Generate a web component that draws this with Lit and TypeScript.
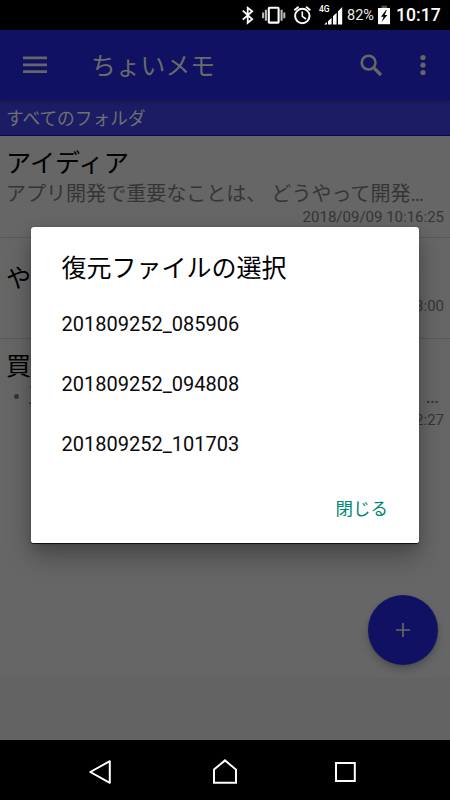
import { LitElement, html, css } from "lit";
import { customElement } from "lit/decorators.js";

interface Memo {
  title: string;
  body: string;
  tail: string;
  date: string;
}

const memos: Memo[] = [
  { title: "アイディア", body: "アプリ開発で重要なことは、 どうやって開発…", tail: "", date: "2018/09/09 10:16:25" },
  { title: "や", body: "", tail: "", date: "2018/09/09 10:13:00" },
  { title: "買", body: "玉", tail: "…", date: "2018/09/09 10:12:27" },
];

const backups = ["201809252_085906", "201809252_094808", "201809252_101703"];

@customElement("status-bar")
class StatusBar extends LitElement {
  static styles = css`
    :host {
      display: flex;
      height: 30px;
      background: #000;
      color: #fff;
      justify-content: flex-end;
      padding-right: 10px;
      box-sizing: border-box;
    }
    svg { display: block; flex: none; }
    .pct { font-size: 14.5px; line-height: 32px; width: 30px; margin-left: 4px; white-space: nowrap; color: #ececec; }
    .clock { font-size: 17.6px; font-weight: 500; line-height: 31px; width: 44px; margin-left: 5px; white-space: nowrap; }
    .net { font: 500 8.5px Roboto, sans-serif; }
  `;
  render() {
    return html`
      <svg width="100" height="30" viewBox="240 0 100 30" fill="none" stroke="#fff">
        <path d="M241.8 10.6 L251.2 19.2 L246.7 22.8 V7.8 L251.2 11.2 L241.8 19.6" stroke-width="1.8" />
        <rect x="267.8" y="7.8" width="9.8" height="14.8" rx=".6" stroke-width="2.1" />
        <path d="M264.9 9.7V20.7M280.6 9.7V20.7" stroke="#bbb" stroke-width="2.1" />
        <path d="M262.1 12.4V18.2M283.3 12.4V18.2" stroke="#bbb" stroke-width="2" />
        <circle cx="301.3" cy="16" r="7.2" stroke-width="2" />
        <path d="M301.3 11.5V16.3L305 19" stroke-width="1.6" />
        <path d="M293.3 10.3 L297.6 6.7M305 6.7 L309.3 10.3" stroke-width="1.8" />
        <g fill="#fff" stroke="none">
          <text class="net" x="318" y="12">4G</text>
          <path d="M323 24.5L326 22V24.5Z" />
          <path d="M327 21.3L330.6 17.7V24.5H327Z M332 16.3L335.6 12.7V24.5H332Z M337 11.3L340 8.3V24.5H337Z" />
        </g>
      </svg>
      <svg width="2" height="30" viewBox="340 0 2 30"><path d="M340 8.3L341.2 7.1V24.5H340Z" fill="#fff" /></svg>
      <span class="pct">82%</span>
      <svg width="14" height="30" viewBox="377 0 14 30">
        <path d="M381.5 5.7H387V8.3H381.5Z" fill="#555" />
        <path d="M378 8H390V24.2H378Z" fill="#fff" />
        <path d="M386 10L381 16.7H383.6L381.6 22L387.3 15H384.6L386.8 10Z" fill="#000" />
      </svg>
      <span class="clock">10:17</span>
    `;
  }
}

@customElement("memo-row")
class MemoRow extends LitElement {
  static properties = { memo: { attribute: false } };
  declare memo: Memo;
  static styles = css`
    :host { display: block; padding: 13px 6px 0; border-bottom: 1px solid #595959; box-sizing: border-box; }
    :host(.first) { height: 102px; }
    :host(.second) { height: 101px; padding-top: 26px; }
    :host(.third) { height: 102px; border: 0; padding-top: 13px; }
    .title { font-size: 25.2px; line-height: 30px; color: #000; white-space: nowrap; }
    .body { display: flex; justify-content: space-between; height: 30px; font-size: 20.05px; line-height: 30px; color: #353535; white-space: nowrap; }
    .lead { display: flex; align-items: center; white-space: pre; }
    .dot { width: 5px; height: 5px; border-radius: 50%; background: #353535; margin: 0 9px 0 8px; }
    .tail { padding-right: 5px; }
    .date { font-size: 15px; line-height: 18px; color: #353535; text-align: right; margin-top: -1px; }
    :host(.second) .body { height: 4px; }
    :host(.third) .body { margin-top: -1px; }
    :host(.third) .date { margin-top: 0; }
  `;
  render() {
    const m = this.memo;
    return html`
      <div class="title">${m.title}</div>
      <div class="body">
        <span class="lead">${m.tail ? html`<i class="dot"></i>` : ""}${m.body}</span>
        <span class="tail">${m.tail}</span>
      </div>
      <div class="date">${m.date}</div>
    `;
  }
}

@customElement("restore-dialog")
class RestoreDialog extends LitElement {
  static styles = css`
    :host {
      display: block;
      box-sizing: border-box;
      width: 388px;
      height: 317px;
      padding: 26px 32px 0 30.5px;
      border-radius: 3px;
      background: #fff;
      color: #0a0a0a;
      border-bottom: 1px solid #111;
      box-shadow: 0 0 1px #333, 0 14px 26px rgba(0, 0, 0, 0.26), 0 3px 12px rgba(0, 0, 0, 0.15);
    }
    h2 { margin: 0; font-size: 25px; font-weight: 400; line-height: 32px; color: #000; }
    ul { list-style: none; margin: 9px 0 0; padding: 0; }
    li { height: 60px; font-size: 20px; line-height: 60px; }
    .actions { display: flex; justify-content: flex-end; }
    .close { border: 0; background: none; padding: 0; font: inherit; font-size: 17.5px; line-height: 26px; color: #008577; margin: 22px -1px 0 0; }
  `;
  render() {
    return html`
      <h2>復元ファイルの選択</h2>
      <ul>${backups.map((b) => html`<li>${b}</li>`)}</ul>
      <div class="actions"><button class="close">閉じる</button></div>
    `;
  }
}

@customElement("app-root")
class AppRoot extends LitElement {
  static styles = css`
    :host {
      display: flex;
      flex-direction: column;
      position: relative;
      width: 450px;
      height: 800px;
      overflow: hidden;
      background: #666;
      font-family: Roboto, "Noto Sans CJK JP", sans-serif;
    }
    svg { display: block; }
    .bar { display: flex; align-items: center; height: 70px; flex: none; background: #111163; color: #6a6a6a; box-shadow: 0 1px 4px rgba(0, 0, 0, 0.35); z-index: 1; }
    .menu { margin-left: 23px; }
    .name { flex: 1; margin-left: 44px; font-size: 24.8px; line-height: 34px; padding-top: 3px; }
    .search { margin-right: 37px; }
    .more { margin-right: 24.5px; }
    .folder { flex: none; height: 36px; box-sizing: border-box; border-bottom: 1px solid #080855; background: #1c1c64; color: #707070; font-size: 17.7px; line-height: 38px; padding-left: 6px; }
    .list { flex: 1; }
    .foot { height: 63px; background: #636363; flex: none; }
    .nav { display: flex; height: 60px; flex: none; background: #000; }
    .dialog { position: absolute; left: 31px; top: 227px; }
    .fab { position: absolute; left: 367.5px; top: 595px; width: 70px; height: 70px; border-radius: 50%; background: #111163; display: flex; align-items: center; justify-content: center; box-shadow: 0 5px 8px rgba(0, 0, 0, 0.2), 0 1px 3px rgba(0, 0, 0, 0.12); }
  `;
  render() {
    return html`
      <status-bar></status-bar>
      <header class="bar">
        <svg class="menu" width="24" height="18" viewBox="0 0 24 18"><path d="M0 1.9H24M0 8.9H24M0 15.6H24" stroke="#666" stroke-width="2.7" /></svg>
        <span class="name">ちょいメモ</span>
        <svg class="search" width="23" height="23" viewBox="0 0 23 23" fill="none" stroke="#666"><circle cx="8.6" cy="8.6" r="6.9" stroke-width="2.6" /><path d="M13.6 13.6L21 21" stroke-width="3.2" /></svg>
        <svg class="more" width="6" height="22" viewBox="0 0 6 22" fill="#666"><circle cx="3" cy="3.5" r="2.6" /><circle cx="3" cy="11" r="2.6" /><circle cx="3" cy="18.5" r="2.6" /></svg>
      </header>
      <div class="folder">すべてのフォルダ</div>
      <main class="list">
        ${memos.map((m, i) => html`<memo-row class=${["first", "second", "third"][i]} .memo=${m}></memo-row>`)}
      </main>
      <div class="foot"></div>
      <nav class="nav">
        <svg width="450" height="60" viewBox="0 740 450 60" fill="none" stroke="#fff" stroke-width="2">
          <path d="M90.3 772L109.8 761.2V782.8Z" stroke-linejoin="round" />
          <path d="M214 769.6L225 760.4L236 769.6V782.8H214Z" />
          <rect x="336" y="763" width="18.8" height="18" />
        </svg>
      </nav>
      <div class="fab">
        <svg width="14" height="14" viewBox="0 0 14 14"><path d="M7 0V14M0 7H14" stroke="#666" stroke-width="1.7" /></svg>
      </div>
      <restore-dialog class="dialog"></restore-dialog>
    `;
  }
}
